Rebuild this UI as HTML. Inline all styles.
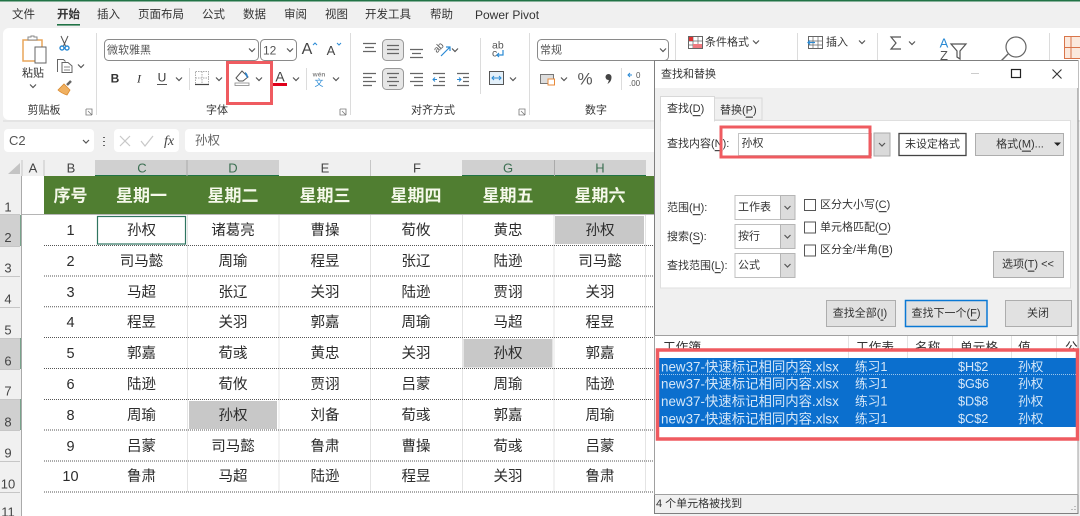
<!DOCTYPE html>
<html lang="zh"><head><meta charset="utf-8"><title>查找和替换</title>
<style>
html,body{margin:0;padding:0;background:#f0f0f0;width:1080px;height:516px;overflow:hidden}
svg{display:block;filter:blur(.3px)}
text{font-family:"Liberation Sans","Noto Sans CJK SC",sans-serif;dominant-baseline:central;fill:#333;font-size:11px;transform:translateY(.6px)}
.m{text-anchor:middle}
.c text{font-size:14.5px;text-anchor:middle;fill:#2b2b2b;transform:translateY(1px)}
.h text{font-size:17px;font-weight:700;text-anchor:middle;fill:#f5f8ea;transform:translateY(1px)}
.rn text{font-size:13px;text-anchor:middle;fill:#444}
.cn text{font-size:13px;text-anchor:middle;fill:#444}
.cs text{fill:#3c6f52}
.b text{fill:#d5e7f8;font-size:12.7px}
.b .w{font-size:13.4px}
.t{font-size:11.5px}
.lh text{font-size:12.7px}
.ch{fill:none;stroke:#555;stroke-width:1.2}
.ln{stroke:#666;stroke-width:1.2;fill:none}
.dot{stroke:#555;stroke-width:1;stroke-dasharray:1 1;fill:none}
.gl{stroke:#e4e4e4;stroke-width:1}
.sep{stroke:#dcdcdc;stroke-width:1}
.red{fill:none;stroke:#ef5b60;stroke-width:3}
.btn{fill:#e1e1e1;stroke:#adadad;stroke-width:1}
</style></head><body>
<svg width="1080" height="516" viewBox="0 0 1080 516" xmlns="http://www.w3.org/2000/svg">
<defs>
<path id="cv" class="ch" d="M-3-1.5L0 1.5L3-1.5"/>
</defs>
<rect width="1080" height="516" fill="#f0f0f0"/>
<rect width="1080" height="1.5" fill="#217346"/>

<!-- tabs -->
<text class="t" x="12" y="14.5">文件</text>
<text class="t" x="57" y="14.5" style="font-weight:700">开始</text>
<text class="t" x="97" y="14.5">插入</text>
<text class="t" x="138" y="14.5">页面布局</text>
<text class="t" x="202" y="14.5">公式</text>
<text class="t" x="243" y="14.5">数据</text>
<text class="t" x="284" y="14.5">审阅</text>
<text class="t" x="325" y="14.5">视图</text>
<text class="t" x="365" y="14.5">开发工具</text>
<text class="t" x="430" y="14.5">帮助</text>
<text x="475" y="14.5" style="font-size:12px">Power Pivot</text>
<rect x="57" y="24" width="23" height="1.6" fill="#217346"/>

<!-- ribbon -->
<rect x="3" y="28" width="1090" height="92" rx="6" fill="#fff"/>
<rect x="3" y="120" width="1077" height="2" fill="#e4e4e4"/>
<g class="sep">
<line x1="96.500" y1="33" x2="96.500" y2="115"/><line x1="350.500" y1="33" x2="350.500" y2="115"/><line x1="529.500" y1="33" x2="529.500" y2="115"/><line x1="675.500" y1="33" x2="675.500" y2="60"/><line x1="797.500" y1="33" x2="797.500" y2="60"/><line x1="877.500" y1="33" x2="877.500" y2="60"/><line x1="1049.500" y1="33" x2="1049.500" y2="60"/>
<line x1="480.500" y1="38" x2="480.500" y2="94"/><line x1="189.500" y1="68" x2="189.500" y2="90"/><line x1="306.500" y1="68" x2="306.500" y2="90"/><line x1="621.500" y1="68" x2="621.500" y2="90"/>
</g>

<!-- clipboard -->
<rect x="23" y="40" width="19" height="21" fill="#fff" stroke="#e9a55a" stroke-width="1.5"/>
<path d="M28 40v-3h3v-1h3v1h3v3z" fill="#fff" stroke="#888"/>
<rect x="35" y="47" width="11" height="16" fill="#fff" stroke="#666"/>
<text class="m" x="33" y="73">粘贴</text>
<use href="#cv" x="33" y="86"/>
<path d="M61 36l4.500 10M68 36l-4.500 10" stroke="#555" fill="none"/>
<circle cx="62" cy="48" r="2" fill="none" stroke="#2a8ad4" stroke-width="1.4"/><circle cx="67" cy="48" r="2" fill="none" stroke="#2a8ad4" stroke-width="1.4"/>
<path d="M57.500 72V59.500h6l2 2M62 62.500h6l4 3.500v6.500h-10z" fill="#fff" stroke="#666"/>
<path d="M64 67h6M64 70h6" stroke="#888"/>
<use href="#cv" x="81" y="66"/>
<path d="M58 90l6-6 6 6-3 5c-3-1-7-3-9-5z" fill="#f0b060" stroke="#d98a30" stroke-width=".8"/>
<path d="M67 85l4-4" stroke="#666" stroke-width="2.5"/>
<text class="m" x="44" y="110">剪贴板</text>
<path d="M86 109h6v6M88 111l4 4M86 109v6h6" fill="none" stroke="#777" stroke-width=".8"/>

<!-- font -->
<rect x="104.500" y="39.500" width="154" height="21" rx="4" fill="#fff" stroke="#8a8a8a"/>
<text x="107" y="50" style="fill:#555">微软雅黑</text>
<use href="#cv" x="252" y="50"/>
<rect x="260.500" y="39.500" width="36" height="21" rx="4" fill="#fff" stroke="#8a8a8a"/>
<text x="263" y="50" style="font-size:12px;fill:#555">12</text>
<use href="#cv" x="290" y="50"/>
<text class="m" x="307" y="49" style="font-size:16px;fill:#444">A</text>
<path d="M313 45l2-2 2 2" fill="none" stroke="#2a8ad4"/>
<text class="m" x="331" y="50" style="font-size:13px;fill:#444">A</text>
<path d="M337 43l2 2 2-2" fill="none" stroke="#2a8ad4"/>
<text class="m" x="115" y="78" style="font-size:12px;font-weight:700">B</text>
<text class="m" x="139" y="78" style="font-size:12px;font-style:italic;font-family:'Liberation Serif',serif">I</text>
<text class="m" x="162" y="77" style="font-size:12px">U</text>
<line x1="157" y1="84.500" x2="167" y2="84.500" stroke="#555"/>
<use href="#cv" x="179" y="79"/>
<path d="M195.500 71.500h13v13h-13zM202 71.500v13M195.500 78h13" fill="none" stroke="#aaa" stroke-dasharray="1.500 1"/>
<line x1="195" y1="84.500" x2="209" y2="84.500" stroke="#444" stroke-width="1.2"/>
<use href="#cv" x="219" y="79"/>
<path d="M236 78l6-7 6 6-5 4h-4z" fill="#fff" stroke="#555"/>
<path d="M245 72c2 1 3 3 3 6-2-1-3-3-3-6z" fill="#2a7fc8"/>
<rect x="235" y="83" width="14" height="2.500" fill="#fff" stroke="#888" stroke-width=".8"/>
<use href="#cv" x="259" y="79"/>
<rect x="227.500" y="62.500" width="44" height="41" class="red"/>
<text class="m" x="280" y="76" style="font-size:14px;fill:#444">A</text>
<rect x="273" y="83" width="14" height="3" fill="#e0001b"/>
<use href="#cv" x="296" y="79"/>
<text class="m" x="319" y="74.500" style="font-size:6.500px;font-weight:700;fill:#888">wén</text>
<text class="m" x="319" y="82.500" style="font-size:9px;fill:#2a8ad4">文</text>
<use href="#cv" x="336" y="79"/>
<text class="m" x="217" y="110">字体</text>
<path d="M340 109h6v6M342 111l4 4M340 109v6h6" fill="none" stroke="#777" stroke-width=".8"/>

<!-- alignment -->
<rect x="382.500" y="39.500" width="21" height="21" rx="4" fill="#e6e6e6" stroke="#999"/>
<rect x="382.500" y="68.500" width="21" height="21" rx="4" fill="#e6e6e6" stroke="#999"/>
<path class="ln" d="M363 43.500h13M365 47.500h9M363 51.500h13"/>
<path class="ln" d="M387 45.500h12M387 49.500h12M387 53.500h12"/>
<path class="ln" d="M410 49.500h13M412 53.500h9M410 57.500h13"/>
<path class="ln" d="M363 73.500h13M363 77.500h9M363 81.500h13M363 85.500h9"/>
<path class="ln" d="M387 73.500h12M389 77.500h8M387 81.500h12M389 85.500h8"/>
<path class="ln" d="M410 73.500h13M414 77.500h9M410 81.500h13M414 85.500h9"/>
<path class="ln" d="M433 73.500h12M439 77.500h6M439 81.500h6M433 85.500h12"/>
<path d="M437 79.500h-4m2-2l-2 2 2 2" fill="none" stroke="#2a8ad4"/>
<path class="ln" d="M457 73.500h12M463 77.500h6M463 81.500h6M457 85.500h12"/>
<path d="M457 79.500h4m-2-2l2 2-2 2" fill="none" stroke="#2a8ad4"/>
<g transform="rotate(-45 439 47)"><text x="433" y="47" style="font-size:9.500px;fill:#555">ab</text></g>
<path d="M441 56l9-9m-4 0h4v4" fill="none" stroke="#2a8ad4" stroke-width="1.2"/>
<use href="#cv" x="455" y="50"/>
<text x="492" y="45" style="font-size:10.500px;fill:#555">ab</text>
<text x="492" y="53" style="font-size:10.500px;fill:#555">c</text>
<path d="M503 50v5h-6m2-2l-2 2 2 2" fill="none" stroke="#2a8ad4" stroke-width="1.2"/>
<rect x="489.500" y="71.500" width="14" height="13" fill="#e3f0fa" stroke="#555"/>
<path d="M492 78h9m-7-2l-2 2 2 2m5-4l2 2-2 2" fill="none" stroke="#2a8ad4"/>
<use href="#cv" x="513" y="79"/>
<text class="m" x="433" y="110">对齐方式</text>
<path d="M519 109h6v6M521 111l4 4M519 109v6h6" fill="none" stroke="#777" stroke-width=".8"/>

<!-- number -->
<rect x="537.500" y="39.500" width="131" height="21" rx="4" fill="#fff" stroke="#8a8a8a"/>
<text x="540" y="50" style="fill:#555">常规</text>
<use href="#cv" x="663" y="50"/>
<rect x="540.500" y="74.500" width="13" height="9" fill="#ddd" stroke="#777"/>
<rect x="548" y="79" width="6.500" height="6" fill="#fff" stroke="#e88a3a"/>
<use href="#cv" x="564" y="79"/>
<text class="m" x="585" y="78.500" style="font-size:17px;fill:#555">%</text>
<circle cx="608.500" cy="77" r="3" fill="#444"/>
<path d="M611.400 77c.3 3-1.200 5.500-4 7 1.200-2 1.700-4 1.500-6z" fill="#444"/>
<path d="M632 75h-4m2-2l-2 2 2 2" fill="none" stroke="#2a8ad4"/>
<text x="636" y="75" style="font-size:8px;fill:#555">0</text>
<text x="629" y="83" style="font-size:8px;fill:#555">.00</text>
<text class="m" x="596" y="110">数字</text>

<!-- styles cells editing -->
<rect x="688.500" y="36.500" width="14" height="12" fill="#fff" stroke="#666"/>
<path d="M688 41h15M688 45h15M693 36v12M698 36v12" stroke="#666" fill="none" stroke-width=".7"/>
<rect x="689" y="37" width="4" height="4" fill="#d33"/><rect x="693" y="44" width="9" height="4" fill="#ef7a80"/>
<text x="705" y="42">条件格式</text>
<use href="#cv" x="756" y="42"/>
<rect x="808.500" y="36.500" width="14" height="12" fill="#fff" stroke="#666"/>
<path d="M808 41h15M808 45h15M813 36v12M818 36v12" stroke="#666" fill="none" stroke-width=".7"/>
<path d="M815 42.500h-7m2-2l-2 2 2 2" fill="none" stroke="#2a8ad4" stroke-width="1.200"/>
<text x="826" y="42">插入</text>
<use href="#cv" x="862" y="42"/>
<path d="M901 37h-10l5 6-5 6h10" fill="none" stroke="#555" stroke-width="1.200"/>
<use href="#cv" x="912" y="43"/>
<text class="m" x="944" y="42.500" style="font-size:13px;fill:#2a8ad4">A</text>
<text class="m" x="944" y="55" style="font-size:13px;fill:#555">Z</text>
<path d="M951 44h15l-6 7v8l-3-2v-6z" fill="none" stroke="#555" stroke-width="1.200"/>
<circle cx="1016" cy="47" r="10" fill="none" stroke="#666" stroke-width="1.200"/>
<line x1="1008" y1="54" x2="1001" y2="61" stroke="#666" stroke-width="1.400"/>
<rect x="1064.500" y="36.500" width="20" height="22" fill="#fbe9dd" stroke="#d9754a"/>
<path d="M1064 47.500h20M1071 36v22" stroke="#d9754a"/>

<!-- formula bar -->
<rect x="4" y="129" width="90" height="23" rx="4" fill="#fff"/>
<text x="9" y="140" style="font-size:13px;fill:#555">C2</text>
<use href="#cv" x="86" y="141.500"/>
<path d="M104 137v1M104 141v1M104 145v1" stroke="#555" stroke-width="1.800"/>
<rect x="114" y="129" width="65" height="23" rx="4" fill="#fff"/>
<path d="M120 136l10 10M130 136l-10 10" stroke="#c8c8c8" stroke-width="1.200"/>
<path d="M141 141l4 5 8-10" stroke="#c8c8c8" stroke-width="1.200" fill="none"/>
<text class="m" x="169" y="141" style="font-size:14px;font-style:italic;font-family:'Liberation Serif',serif;fill:#444">fx</text>
<rect x="185" y="129" width="500" height="23" rx="4" fill="#fff"/>
<text x="195" y="140" style="font-size:12.500px;fill:#666">孙权</text>

<!-- sheet -->
<rect x="0" y="160" width="660" height="356" fill="#fff"/>
<rect x="0" y="160" width="654" height="16" fill="#f0f0f0"/>
<rect x="0" y="176" width="22" height="340" fill="#f0f0f0"/>
<path d="M8 174h12v-11z" fill="#c4c4c4"/>
<rect x="95" y="160" width="184" height="16" fill="#d0d0d0"/><rect x="462" y="160" width="184" height="16" fill="#d0d0d0"/>
<rect x="95" y="175" width="184" height="1.500" fill="#217346"/><rect x="462" y="175" width="184" height="1.500" fill="#217346"/>
<rect x="0" y="215" width="20.500" height="31" fill="#d0d0d0"/><rect x="0" y="338" width="20.500" height="31" fill="#d0d0d0"/><rect x="0" y="399" width="20.500" height="31" fill="#d0d0d0"/>
<rect x="20.500" y="215" width="1.200" height="31" fill="#217346"/><rect x="20.500" y="338" width="1.200" height="31" fill="#217346"/><rect x="20.500" y="399" width="1.200" height="31" fill="#217346"/>
<line x1="21.500" y1="176" x2="21.500" y2="516" stroke="#aaa"/>
<g stroke="#c6c6c6"><line x1="22" y1="160" x2="22" y2="176"/><line x1="44" y1="160" x2="44" y2="176"/><line x1="187" y1="160" x2="187" y2="176" stroke="#aaa"/><line x1="370.500" y1="160" x2="370.500" y2="176"/><line x1="554.500" y1="160" x2="554.500" y2="176" stroke="#aaa"/>
<path d="M0 246.500h20M0 276.500h20M0 307.500h20M0 338.500h20M0 369.500h20M0 399.500h20M0 430.500h20M0 461.500h20M0 492.500h20M0 214.500h20" fill="none"/></g>
<g class="cn"><text x="33" y="167.500">A</text><text x="71" y="167.500">B</text><text x="325" y="167.500">E</text><text x="417" y="167.500">F</text></g>
<g class="cn cs"><text x="142" y="167.500">C</text><text x="233" y="167.500">D</text><text x="508" y="167.500">G</text><text x="600" y="167.500">H</text></g>
<g class="rn">
<text x="8" y="206.500">1</text><text x="8" y="237">2</text><text x="8" y="267.500">3</text><text x="8" y="298.500">4</text><text x="8" y="329.500">5</text><text x="8" y="360.500">6</text><text x="8" y="390.500">7</text><text x="8" y="421.500">8</text><text x="8" y="452.500">9</text><text x="8" y="483.500">10</text><text x="8" y="511.500">11</text>
</g>

<rect x="44" y="176" width="610" height="38" fill="#507e31"/>
<rect x="22" y="214" width="632" height="1" fill="#b5b5b5"/>
<g class="gl">
<line x1="187.500" y1="215" x2="187.500" y2="492"/><line x1="279" y1="215" x2="279" y2="492"/><line x1="370.500" y1="215" x2="370.500" y2="492"/><line x1="462.500" y1="215" x2="462.500" y2="492"/><line x1="554" y1="215" x2="554" y2="492"/><line x1="645.500" y1="215" x2="645.500" y2="492"/>
</g>
<rect x="555" y="216" width="89" height="28" fill="#c8c8c8"/>
<rect x="463.500" y="339" width="89" height="28.500" fill="#c8c8c8"/>
<rect x="189" y="401" width="88" height="28" fill="#c8c8c8"/>
<rect x="97.500" y="216.500" width="88" height="27.500" fill="#fff" stroke="#2f7560" stroke-width="1.200"/>
<g class="dot">
<line x1="44" y1="245.500" x2="654" y2="245.500"/><line x1="44" y1="276" x2="654" y2="276"/><line x1="44" y1="306.700" x2="654" y2="306.700"/><line x1="44" y1="337.500" x2="654" y2="337.500"/><line x1="44" y1="368.500" x2="654" y2="368.500"/><line x1="44" y1="399.500" x2="654" y2="399.500"/><line x1="44" y1="430" x2="654" y2="430"/><line x1="44" y1="461" x2="654" y2="461"/><line x1="44" y1="492" x2="654" y2="492"/>
</g>
<g class="h"><text x="70.500" y="195">序号</text><text x="141.500" y="195">星期一</text><text x="233" y="195">星期二</text><text x="325" y="195">星期三</text><text x="416" y="195">星期四</text><text x="508" y="195">星期五</text><text x="600" y="195">星期六</text></g>
<g class="c">
<text x="70.500" y="230">1</text><text x="141.500" y="230">孙权</text><text x="233" y="230">诸葛亮</text><text x="325" y="230">曹操</text><text x="416" y="230">荀攸</text><text x="508" y="230">黄忠</text><text x="600" y="230">孙权</text>
<text x="70.500" y="261">2</text><text x="141.500" y="261">司马懿</text><text x="233" y="261">周瑜</text><text x="325" y="261">程昱</text><text x="416" y="261">张辽</text><text x="508" y="261">陆逊</text><text x="600" y="261">司马懿</text>
<text x="70.500" y="292">3</text><text x="141.500" y="292">马超</text><text x="233" y="292">张辽</text><text x="325" y="292">关羽</text><text x="416" y="292">陆逊</text><text x="508" y="292">贾诩</text><text x="600" y="292">关羽</text>
<text x="70.500" y="322">4</text><text x="141.500" y="322">程昱</text><text x="233" y="322">关羽</text><text x="325" y="322">郭嘉</text><text x="416" y="322">周瑜</text><text x="508" y="322">马超</text><text x="600" y="322">程昱</text>
<text x="70.500" y="353">5</text><text x="141.500" y="353">郭嘉</text><text x="233" y="353">荀彧</text><text x="325" y="353">黄忠</text><text x="416" y="353">关羽</text><text x="508" y="353">孙权</text><text x="600" y="353">郭嘉</text>
<text x="70.500" y="384">6</text><text x="141.500" y="384">陆逊</text><text x="233" y="384">荀攸</text><text x="325" y="384">贾诩</text><text x="416" y="384">吕蒙</text><text x="508" y="384">周瑜</text><text x="600" y="384">陆逊</text>
<text x="70.500" y="415">8</text><text x="141.500" y="415">周瑜</text><text x="233" y="415">孙权</text><text x="325" y="415">刘备</text><text x="416" y="415">荀彧</text><text x="508" y="415">郭嘉</text><text x="600" y="415">周瑜</text>
<text x="70.500" y="446">9</text><text x="141.500" y="446">吕蒙</text><text x="233" y="446">司马懿</text><text x="325" y="446">鲁肃</text><text x="416" y="446">曹操</text><text x="508" y="446">荀彧</text><text x="600" y="446">吕蒙</text>
<text x="70.500" y="476">10</text><text x="141.500" y="476">鲁肃</text><text x="233" y="476">马超</text><text x="325" y="476">陆逊</text><text x="416" y="476">程昱</text><text x="508" y="476">关羽</text><text x="600" y="476">鲁肃</text>
</g>

<!-- dialog -->
<rect x="654.500" y="60.500" width="423.500" height="453" fill="#f0f0f0" stroke="#7f7f7f"/>
<rect x="655" y="61" width="423" height="27" fill="#fff"/>
<text x="661" y="74">查找和替换</text>
<line x1="971" y1="73.500" x2="979" y2="73.500" stroke="#ccc"/>
<rect x="1011.500" y="69.500" width="9" height="8" fill="none" stroke="#222" stroke-width="1.200"/>
<path d="M1052.500 69.500l9 9M1061.500 69.500l-9 9" stroke="#333" stroke-width="1.100"/>
<rect x="660.500" y="120.500" width="410" height="167.500" fill="#fff" stroke="#dfdfdf"/>
<path d="M714.500 120v-22h47.500v22z" fill="#f0f0f0" stroke="#d8d8d8"/>
<path d="M660.500 121v-24.500h54v24.500z" fill="#fff" stroke="#d8d8d8"/>
<rect x="661" y="119" width="53" height="3" fill="#fff"/>
<text x="667" y="108.500">查找(<tspan text-decoration="underline">D</tspan>)</text>
<text x="720" y="110">替换(<tspan text-decoration="underline">P</tspan>)</text>

<text x="667" y="143.500">查找内容(<tspan text-decoration="underline">N</tspan>):</text>
<rect x="738.500" y="133.500" width="133" height="22" fill="#fff" stroke="#c4c4c4"/>
<text x="741.500" y="143">孙权</text>
<rect x="874" y="133" width="16" height="23" fill="#dadada" stroke="#aaa"/>
<use href="#cv" x="882" y="144.500"/>
<rect x="721" y="127" width="149" height="30" class="red"/>
<rect x="899" y="133.500" width="67" height="22" fill="#fff" stroke="#444" stroke-width="1.300"/>
<text class="m" x="932.500" y="144">未设定格式</text>
<rect x="975.500" y="133.500" width="88" height="22" class="btn"/>
<text class="m" x="1020" y="144">格式(<tspan text-decoration="underline">M</tspan>)...</text>
<path d="M1054 142.500h7l-3.500 3.500z" fill="#222"/>

<text x="667" y="207.500">范围(<tspan text-decoration="underline">H</tspan>):</text>
<text x="667" y="236.500">搜索(<tspan text-decoration="underline">S</tspan>):</text>
<text x="667" y="265.500">查找范围(<tspan text-decoration="underline">L</tspan>):</text>
<g fill="#fff" stroke="#c0c0c0">
<rect x="735" y="195.500" width="60" height="24"/><rect x="735" y="224.500" width="60" height="24"/><rect x="735" y="253.500" width="60" height="24"/></g>
<g fill="#dcdcdc" stroke="#b5b5b5">
<rect x="780.500" y="195.500" width="14.500" height="24"/><rect x="780.500" y="224.500" width="14.500" height="24"/><rect x="780.500" y="253.500" width="14.500" height="24"/></g>
<use href="#cv" x="787.500" y="207.500"/><use href="#cv" x="787.500" y="236.500"/><use href="#cv" x="787.500" y="265.500"/>
<text x="738" y="207">工作表</text><text x="738" y="236">按行</text><text x="738" y="265">公式</text>
<g fill="#fff" stroke="#555"><rect x="804.500" y="199.500" width="11" height="11"/><rect x="804.500" y="222" width="11" height="11"/><rect x="804.500" y="245" width="11" height="11"/></g>
<text x="820" y="204.500">区分大小写(<tspan text-decoration="underline">C</tspan>)</text>
<text x="820" y="227">单元格匹配(<tspan text-decoration="underline">O</tspan>)</text>
<text x="820" y="249.500">区分全/半角(<tspan text-decoration="underline">B</tspan>)</text>
<rect x="993.500" y="251.500" width="70" height="26" class="btn"/>
<text class="m" x="1028" y="264">选项(<tspan text-decoration="underline">T</tspan>) &lt;&lt;</text>

<rect x="826.500" y="300.500" width="69" height="26" class="btn"/>
<text class="m" x="860" y="313">查找全部(<tspan text-decoration="underline">I</tspan>)</text>
<rect x="905.500" y="300.500" width="81.500" height="26" fill="#e1e1e1" stroke="#0a78d4" stroke-width="1.500"/>
<text class="m" x="946" y="313">查找下一个(<tspan text-decoration="underline">F</tspan>)</text>
<rect x="1005.500" y="300.500" width="66" height="26" class="btn"/>
<text class="m" x="1038" y="313">关闭</text>

<!-- results -->
<rect x="654.500" y="335.500" width="423.500" height="159" fill="#fff" stroke="#a0a0a0"/>
<g class="lh"><text x="663" y="347">工作簿</text><text x="856" y="347">工作表</text><text x="915" y="347">名称</text><text x="960" y="347">单元格</text><text x="1018" y="347">值</text><text x="1065" y="347">公</text></g>
<rect x="655" y="351" width="423" height="7" fill="#fff"/>
<g stroke="#e3e3e3"><line x1="848.500" y1="336" x2="848.500" y2="358"/><line x1="907.500" y1="336" x2="907.500" y2="358"/><line x1="952.500" y1="336" x2="952.500" y2="358"/><line x1="1011.500" y1="336" x2="1011.500" y2="358"/><line x1="1056.500" y1="336" x2="1056.500" y2="358"/></g>
<rect x="659" y="358" width="418" height="69" fill="#0b6fce"/>
<line x1="659" y1="374.500" x2="1077" y2="374.500" stroke="#9cc4ea" stroke-dasharray="1 1"/>
<g class="b">
<text class="w" x="661" y="366.500">new37-快速标记相同内容.xlsx</text><text x="855" y="366.500">练习1</text><text x="958" y="366.500">$H$2</text><text x="1018" y="366.500">孙权</text>
<text class="w" x="661" y="383.500">new37-快速标记相同内容.xlsx</text><text x="855" y="383.500">练习1</text><text x="958" y="383.500">$G$6</text><text x="1018" y="383.500">孙权</text>
<text class="w" x="661" y="401">new37-快速标记相同内容.xlsx</text><text x="855" y="401">练习1</text><text x="958" y="401">$D$8</text><text x="1018" y="401">孙权</text>
<text class="w" x="661" y="418.500">new37-快速标记相同内容.xlsx</text><text x="855" y="418.500">练习1</text><text x="958" y="418.500">$C$2</text><text x="1018" y="418.500">孙权</text>
</g>
<rect x="657.500" y="350" width="420" height="89" class="red" style="stroke-width:3.500"/>
<text x="656" y="503.500">4 个单元格被找到</text>
<path d="M1075 506v1M1072 509v1M1075 509v1" stroke="#aaa" stroke-width="1.500"/>
</svg>
</body></html>
